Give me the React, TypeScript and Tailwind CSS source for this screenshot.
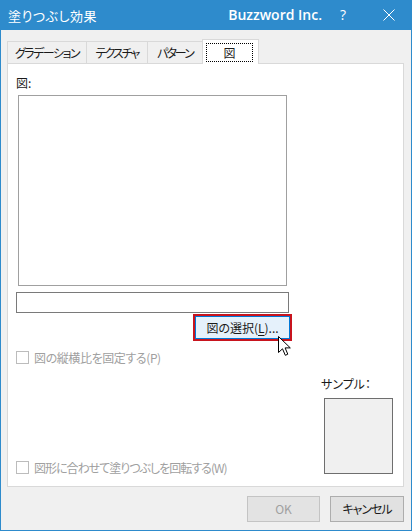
import React from "react";

const jp = "font-['Noto_Sans_CJK_JP',sans-serif] [font-feature-settings:'palt']";

function Checkbox({ label, track }: { label: string; track: string }) {
  return (
    <div className="flex h-[13px] items-center gap-[5px]">
      <div className="h-[13px] w-[13px] shrink-0 border border-[#bcbcbc] bg-white" />
      <span className={`whitespace-nowrap text-[#a0a0a0] ${track}`}>{label}</span>
    </div>
  );
}

export default function App() {
  return (
    <div
      className={`relative flex h-[531px] w-[412px] flex-col overflow-hidden bg-[#2e8bcc] text-[12px] leading-[16px] text-[#1a1a1a] ${jp}`}
    >
      {/* Title bar */}
      <div className="flex h-[30px] shrink-0 items-center text-white">
        <span className="pl-[8px] pt-[2px] text-[13px] tracking-[0.5px]">塗りつぶし効果</span>
        <div className="flex-1" />
        <span className="font-['Open_Sans',sans-serif] text-[14px] font-semibold leading-[20px] tracking-normal">
          Buzzword Inc.
        </span>
        <div className="-ml-[2px] flex w-[46px] justify-center font-['Open_Sans',sans-serif] text-[14px] leading-[20px]">
          ?
        </div>
        <div className="flex w-[46px] justify-center">
          <svg width="12" height="12" viewBox="0 0 12 12" fill="none">
            <path d="M0.5 0.5 L11.5 11.5 M11.5 0.5 L0.5 11.5" stroke="white" strokeWidth="1" />
          </svg>
        </div>
      </div>

      {/* Body */}
      <div className="mx-px mb-px flex flex-1 flex-col bg-[#f0f0f0] pl-[6px] pr-[7px] pt-[9px]">
        {/* Tabs */}
        <div className="flex h-[24px] items-end">
          <div className="flex h-[22px] w-[79px] items-center justify-center border-l border-t border-[#d9d9d9] tracking-[-1.5px]">
            グラデーション
          </div>
          <div className="flex h-[22px] w-[61px] items-center justify-center border-l border-t border-[#d9d9d9] tracking-[-2px]">
            テクスチャ
          </div>
          <div className="flex h-[22px] w-[55px] items-center justify-center border-l border-t border-[#d9d9d9] tracking-[-2px]">
            パターン
          </div>
          <div className="relative z-10 -mb-px h-[25px] w-[57px] border-l border-r border-t border-[#d9d9d9] bg-white pl-[3px] pt-[3px]">
            <div className="flex h-[19px] w-[47px] items-center justify-center border border-dotted border-black">
              図
            </div>
          </div>
        </div>

        {/* Panel */}
        <div className="flex h-[424px] w-[397px] flex-col border border-[#d9d9d9] bg-white pl-[8px] pt-[11px]">
          <div className="flex w-[276px] flex-col">
            <div className="h-[16px]">図:</div>
            <div className="ml-[2px] mt-[4px] h-[191px] w-[269px] border border-[#a0a0a0] bg-white" />
            <div className="mt-[6px] h-[21px] w-[273px] border border-[#7a7a7a] bg-white" />
            <div className="mt-[1px] self-end border-2 border-[#c8141e]">
              <div className="flex h-[23px] w-[95px] items-center justify-center border border-[#0078d7] bg-[#e5f1fb]">
                <span className="whitespace-nowrap">
                  図の選択(<span className="underline underline-offset-2">L</span>)...
                </span>
              </div>
            </div>
            <div className="mt-[10px]">
              <Checkbox label="図の縦横比を固定する(P)" track="tracking-[-0.4px]" />
            </div>
          </div>

          <div className="flex flex-1 items-end justify-between pb-[12px] pr-[10px]">
            <Checkbox label="図形に合わせて塗りつぶしを回転する(W)" track="tracking-[-1px]" />
            <div className="flex flex-col">
              <div className="-ml-[3px] mb-[6px] h-[16px] whitespace-nowrap">サンプル：</div>
              <div className="h-[76px] w-[69px] border border-[#6e6e6e] bg-[#f0f0f0]" />
            </div>
          </div>
        </div>

        {/* Buttons */}
        <div className="mt-[9px] flex justify-end gap-[10px]">
          <div className="flex h-[26px] w-[73px] items-center justify-center border border-[#c4c4c4] bg-[#e3e3e3] text-[#a0a0a0]">
            OK
          </div>
          <div className="flex h-[26px] w-[74px] items-center justify-center border border-[#adadad] bg-[#e1e1e1] tracking-[-1px]">
            キャンセル
          </div>
        </div>
      </div>

      {/* Mouse cursor */}
      <svg
        className="absolute left-[278px] top-[336px]"
        width="14"
        height="21"
        viewBox="0 0 14 21"
        fill="none"
      >
        <path
          d="M0.5 0.5 L0.5 16.5 L4.5 12.8 L7.3 19.3 L9.8 18.2 L7.1 11.9 L12.3 11.9 Z"
          fill="white"
          stroke="black"
          strokeWidth="1"
          strokeLinejoin="miter"
        />
      </svg>
    </div>
  );
}
